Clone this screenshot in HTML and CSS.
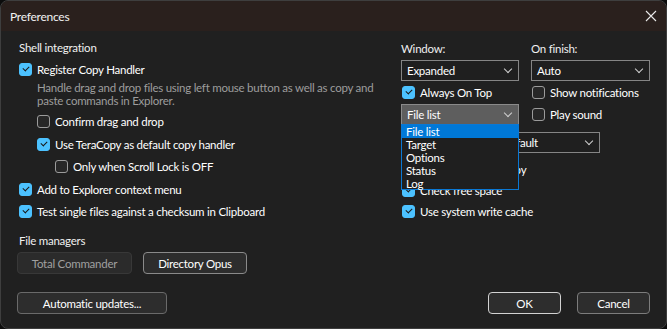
FILE: index.html
```html
<!DOCTYPE html>
<html>
<head>
<meta charset="utf-8">
<link rel="stylesheet" href="styles.css">
</head>
<body>
<div class="window">
  <div class="titlebar">
    <span class="title">Preferences</span>
    <svg class="close" width="12" height="12" viewBox="0 0 12 12"><path d="M1 1L11 11M11 1L1 11" stroke="#e8e8e8" stroke-width="1.1" fill="none"/></svg>
  </div>
  <div class="content">
    <div class="main">
      <div class="left">
        <div class="row label head">Shell integration</div>
        <div class="row"><span class="cb on"></span><span>Register Copy Handler</span></div>
        <div class="desc">Handle drag and drop files using left mouse button as well as copy and paste commands in Explorer.</div>
        <div class="row ind1 first-sub"><span class="cb"></span><span>Confirm drag and drop</span></div>
        <div class="row ind1 nudge"><span class="cb on"></span><span>Use TeraCopy as default copy handler</span></div>
        <div class="row ind2"><span class="cb"></span><span>Only when Scroll Lock is OFF</span></div>
        <div class="row nudge"><span class="cb on"></span><span>Add to Explorer context menu</span></div>
        <div class="row"><span class="cb on"></span><span>Test single files against a checksum in Clipboard</span></div>
        <div class="label fm">File managers</div>
        <div class="btnrow">
          <button class="btn disabled tc">Total Commander</button>
          <button class="btn dopus">Directory Opus</button>
        </div>
      </div>
      <div class="right">
        <div class="row label">Window:</div>
        <div class="row label">On finish:</div>
        <div class="combo top"><span>Expanded</span><i class="chev"></i></div>
        <div class="combo top"><span>Auto</span><i class="chev"></i></div>
        <div class="row rcb tall"><span class="cb on"></span><span>Always On Top</span></div>
        <div class="row rcb tall"><span class="cb"></span><span>Show notifications</span></div>
        <div class="combo focus"><span>File list</span><i class="chev"></i></div>
        <div class="row rcb short"><span class="cb"></span><span>Play sound</span></div>
        <div class="combo wide"><span class="dtext">Default</span><i class="chev"></i></div>
        <div class="row rcb span first-r"><span class="cb on"></span><span>Always test after copy</span></div>
        <div class="row rcb span"><span class="cb on"></span><span>Check free space</span></div>
        <div class="row rcb span"><span class="cb on"></span><span>Use system write cache</span></div>
        <ul class="droplist">
          <li class="sel">File list</li>
          <li>Target</li>
          <li>Options</li>
          <li>Status</li>
          <li>Log</li>
        </ul>
      </div>
    </div>
    <div class="footer">
      <button class="btn upd">Automatic updates...</button>
      <div class="actions">
        <button class="btn ok">OK</button>
        <button class="btn cancel">Cancel</button>
      </div>
    </div>
  </div>
</div>
</body>
</html>
```
FILE: styles.css
```css
* { box-sizing: border-box; }
html, body { margin: 0; padding: 0; background: #0c0c0c; }
body {
  width: 667px; height: 329px; overflow: hidden;
  font-family: "Lato", "Segoe UI", sans-serif; font-size: 11.5px; letter-spacing: -0.25px;
  color: #ffffff;
}
.window {
  width: 667px; height: 329px;
  background: #202020;
  border: 1px solid #3e3e3e;
  border-radius: 8px;
  overflow: hidden;
  display: flex; flex-direction: column;
}
.titlebar {
  height: 30px; flex: none;
  background: #2a201d;
  display: flex; align-items: center; justify-content: space-between;
  padding: 0 9px 0 9px;
}
.title { color: #f2f2f2; font-size: 12px; }
.content { flex: 1; display: flex; flex-direction: column; padding: 6px 16px 0 18px; }
.main { display: flex; }
.left { width: 383px; display: flex; flex-direction: column; }
.row { height: 22px; display: flex; align-items: center; white-space: nowrap; }
.label { color: #f0f0f0; }
.head { height: 21px; }
.cb {
  width: 13px; height: 13px; flex: none;
  border: 1px solid #9b9b9b; border-radius: 3px;
  background: #272727;
  margin-right: 5px;
  position: relative;
}
.cb.on { background: #4cc2ff; border-color: #4cc2ff; }
.cb.on::after {
  content: ""; position: absolute; left: 3px; top: 2px;
  width: 5px; height: 3px;
  border-left: 1px solid #1a1a1a; border-bottom: 1px solid #1a1a1a;
  transform: rotate(-45deg);
}
.desc { padding-left: 18px; color: #9d9d9d; line-height: 13px; margin-top: 1px; width: 362px; }
.ind1 { padding-left: 18px; }
.ind2 { padding-left: 36px; }
.first-sub { margin-top: 3px; }
.nudge { margin-top: 1px; }
.fm { margin-top: 10px; height: 18px; line-height: 18px; }
.btnrow { display: flex; gap: 11px; margin-top: 2px; margin-left: -2px; }
.btn {
  font-family: inherit; font-size: 11.5px; letter-spacing: -0.25px; color: #ffffff;
  background: #2d2d2d; border: 1px solid #6a6a6a; border-radius: 4px;
  height: 22px; padding: 0; display: flex; align-items: center; justify-content: center;
}
.btn.disabled { color: #a0a0a0; border-color: #383838; background: #2b2b2b; }
.tc { width: 115px; }
.dopus { width: 104px; border-color: #8a8a8a; }
.right {
  position: relative;
  display: grid; grid-template-columns: 118px 119px; column-gap: 12px;
  grid-auto-rows: auto; align-content: start;
}
.combo {
  height: 21px; border: 1px solid #858585; background: #1f1f1f;
  display: flex; align-items: center; justify-content: space-between;
  padding: 0 4px 0 5px; white-space: nowrap;
}
.combo.top { margin-top: 1px; }
.combo.focus { background: #5e5e5e; border-color: #8a8a8a; }
.combo.wide { grid-column: 1 / span 2; width: 199px; margin-top: 7px; }
.dtext { padding-left: 95px; }
.chev {
  width: 6px; height: 6px; border-right: 1px solid #cfcfcf; border-bottom: 1px solid #cfcfcf;
  transform: rotate(45deg); margin: -4px 3px 0 0;
}
.rcb { padding-left: 1px; }
.tall { height: 23px; }
.short { height: 20px; }
.span { grid-column: 1 / span 2; height: 21px; }
.first-r { margin-top: 6px; }
.droplist {
  position: absolute; left: 0; top: 87px; width: 118px; height: 66px;
  margin: 0; padding: 0; list-style: none;
  background: #1f1f1f; border: 1px solid #0a78d4;
}
.droplist li { height: 13px; line-height: 13px; padding-left: 4px; }
.droplist li.sel { background: #0078d7; }
.footer { display: flex; justify-content: space-between; margin-top: auto; margin-bottom: 14px; margin-left: -2px; }
.upd { width: 150px; }
.actions { display: flex; gap: 16px; }
.ok { width: 73px; border-color: #d2d2d2; }
.cancel { width: 73px; border-color: #7c7c7c; }
```
